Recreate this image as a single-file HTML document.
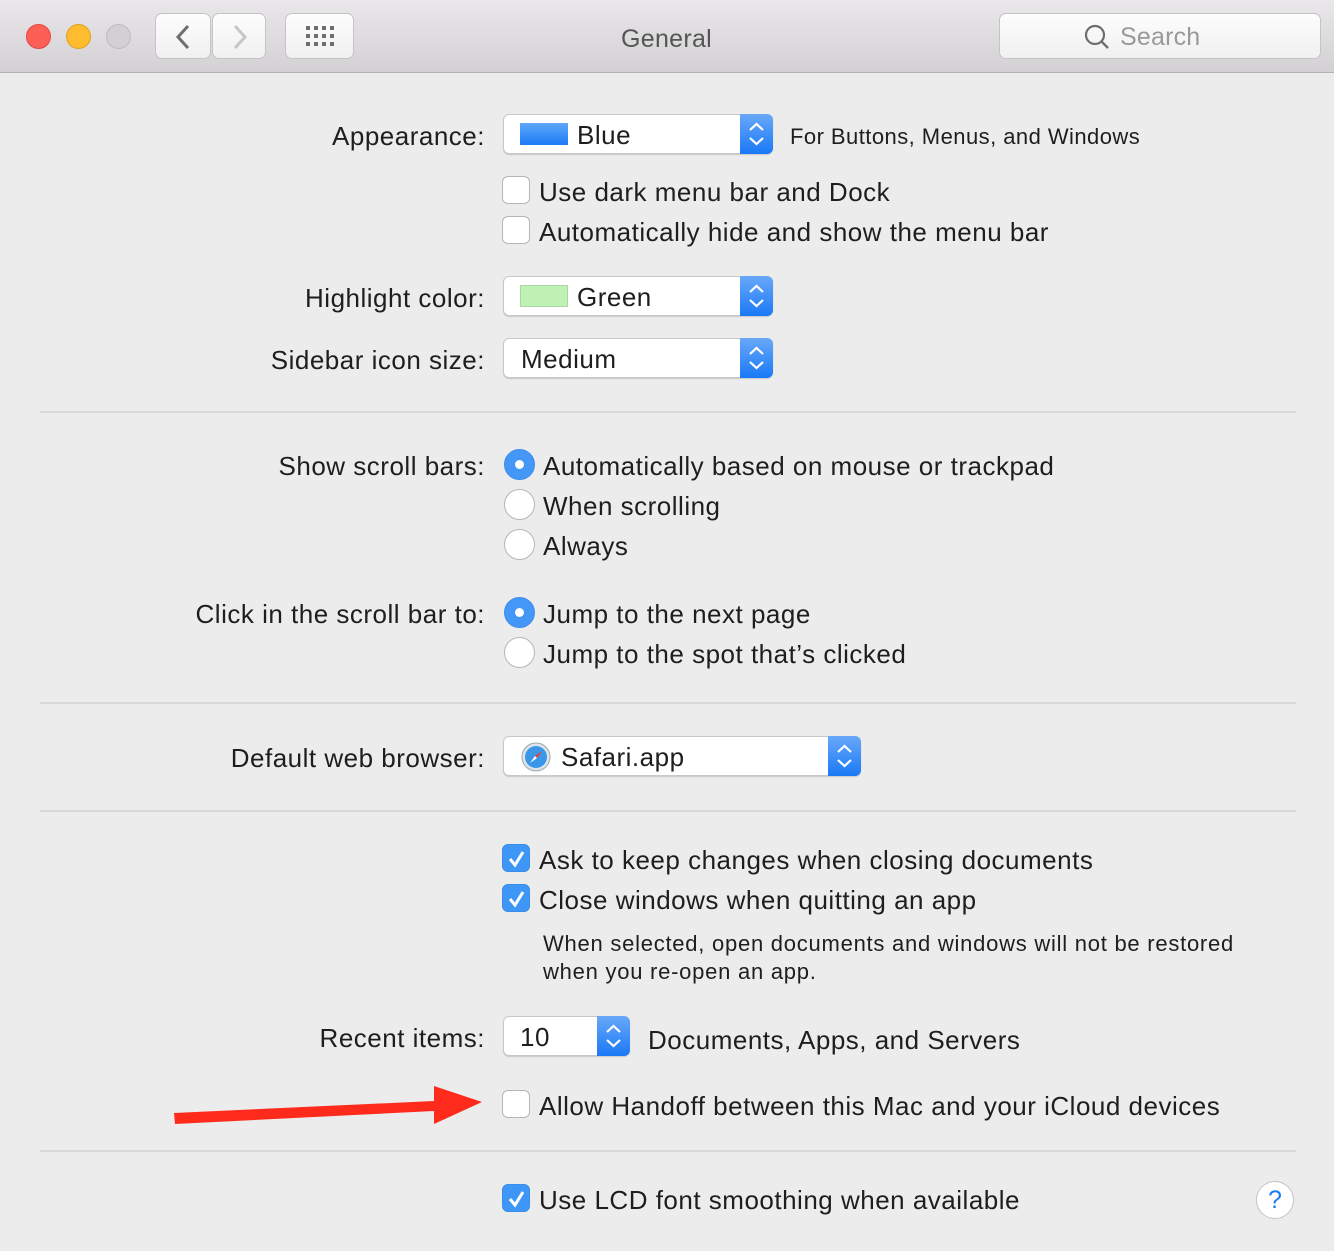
<!DOCTYPE html>
<html><head><meta charset="utf-8"><style>
*{box-sizing:border-box;margin:0;padding:0}
body{width:1334px;height:1251px;background:#ececec;font-family:"Liberation Sans",sans-serif;color:#1e1e1e;position:relative;overflow:hidden}
.tb{position:absolute;left:0;top:0;width:1334px;height:73px;background:linear-gradient(#e9e7e9,#d3d1d3);border-bottom:1px solid #b4b4b4}
.a{position:absolute;white-space:nowrap;line-height:30px;font-size:26px;letter-spacing:0.5px}
.lab{position:absolute;right:849px;white-space:nowrap;line-height:30px;font-size:26px;letter-spacing:0.5px;text-align:right}
.dot{position:absolute;width:25px;height:25px;border-radius:50%;top:24px}
.btn{position:absolute;top:13px;height:46px;background:linear-gradient(#fdfdfd,#f0f0f0);border:1px solid #c4c4c4;border-radius:7px}
.pop{position:absolute;height:40px;background:#fff;border:1px solid #c8c8c8;border-radius:6px;box-shadow:0 1px 1px rgba(0,0,0,.15)}
.pop .arr{position:absolute;right:-1px;top:-1px;width:33px;height:40px;background:linear-gradient(#69a8f8,#1a79f6);border-radius:0 6px 6px 0}
.pop .t{position:absolute;top:5px;line-height:30px;font-size:26px;letter-spacing:0.5px}
.cb{position:absolute;left:502px;width:28px;height:28px;border:1px solid #b6b6b6;border-radius:6px;background:#fff}
.cb.on{background:#3e97f6;border-color:#3a8ee8}
.rb{position:absolute;left:504px;width:31px;height:31px;border-radius:50%;border:1px solid #b6b6b6;background:#fff}
.rb.on{background:#4497f6;border-color:#3f8deb}
.rb.on::after{content:"";position:absolute;left:10px;top:10px;width:9px;height:9px;border-radius:50%;background:#fff}
.sep{position:absolute;left:40px;width:1256px;height:2px;background:#d8d8d8}
</style></head><body>
<div class="tb"></div>
<div class="dot" style="left:26px;background:#fd5f57;border:1px solid #e2463f"></div>
<div class="dot" style="left:66px;background:#febc2e;border:1px solid #dea123"></div>
<div class="dot" style="left:106px;background:#d2d0d2;border:1px solid #bdbbbd"></div>
<div class="btn" style="left:155px;width:56px"><svg width="56" height="46"><path d="M32 12 L22 23 L32 34" stroke="#6e6e6e" stroke-width="3" fill="none"/></svg></div>
<div class="btn" style="left:212px;width:54px"><svg width="54" height="46"><path d="M22 12 L32 23 L22 34" stroke="#c6c6c6" stroke-width="3" fill="none"/></svg></div>
<div class="btn" style="left:285px;width:69px"><svg width="69" height="46" fill="#6e6e6e"><rect x="20" y="12" width="4" height="4"/><rect x="28" y="12" width="4" height="4"/><rect x="36" y="12" width="4" height="4"/><rect x="44" y="12" width="4" height="4"/><rect x="20" y="20" width="4" height="4"/><rect x="28" y="20" width="4" height="4"/><rect x="36" y="20" width="4" height="4"/><rect x="44" y="20" width="4" height="4"/><rect x="20" y="28" width="4" height="4"/><rect x="28" y="28" width="4" height="4"/><rect x="36" y="28" width="4" height="4"/><rect x="44" y="28" width="4" height="4"/></svg></div>
<div class="a" style="left:621px;top:24px;color:#555;font-size:25px;letter-spacing:0.3px">General</div>
<div class="btn" style="left:999px;width:322px"><svg style="position:absolute;left:84px;top:10px" width="28" height="28"><circle cx="11" cy="11" r="9" stroke="#6e6e6e" stroke-width="2.2" fill="none"/><path d="M17.5 17.5 L24 24" stroke="#6e6e6e" stroke-width="2.4"/></svg><span class="a" style="left:120px;top:8px;color:#999;font-size:25px;letter-spacing:0.2px">Search</span></div>

<div class="lab" style="top:121px">Appearance:</div>
<div class="pop" style="left:503px;top:114px;width:270px"><div style="position:absolute;left:16px;top:8px;width:48px;height:22px;background:linear-gradient(#5ea7fb,#1b7af5)"></div><span class="t" style="left:73px">Blue</span><div class="arr"><svg width="33" height="40"><path d="M10 16 L16.5 10 L23 16 M10 24 L16.5 30 L23 24" stroke="#fff" stroke-width="2.2" fill="none"/></svg></div></div>
<div class="a" style="left:790px;top:122px;font-size:22px;letter-spacing:0.45px">For Buttons, Menus, and Windows</div>
<div class="cb" style="top:176px"></div><div class="a" style="left:539px;top:177px">Use dark menu bar and Dock</div>
<div class="cb" style="top:216px"></div><div class="a" style="left:539px;top:217px">Automatically hide and show the menu bar</div>

<div class="lab" style="top:283px">Highlight color:</div>
<div class="pop" style="left:503px;top:276px;width:270px"><div style="position:absolute;left:16px;top:8px;width:48px;height:22px;background:#bff0b4;border:1px solid #a8d89e"></div><span class="t" style="left:73px">Green</span><div class="arr"><svg width="33" height="40"><path d="M10 16 L16.5 10 L23 16 M10 24 L16.5 30 L23 24" stroke="#fff" stroke-width="2.2" fill="none"/></svg></div></div>
<div class="lab" style="top:345px">Sidebar icon size:</div>
<div class="pop" style="left:503px;top:338px;width:270px"><span class="t" style="left:17px">Medium</span><div class="arr"><svg width="33" height="40"><path d="M10 16 L16.5 10 L23 16 M10 24 L16.5 30 L23 24" stroke="#fff" stroke-width="2.2" fill="none"/></svg></div></div>
<div class="sep" style="top:411px"></div>

<div class="lab" style="top:451px">Show scroll bars:</div>
<div class="rb on" style="top:449px"></div><div class="a" style="left:543px;top:451px">Automatically based on mouse or trackpad</div>
<div class="rb" style="top:489px"></div><div class="a" style="left:543px;top:491px">When scrolling</div>
<div class="rb" style="top:529px"></div><div class="a" style="left:543px;top:531px">Always</div>
<div class="lab" style="top:599px">Click in the scroll bar to:</div>
<div class="rb on" style="top:597px"></div><div class="a" style="left:543px;top:599px">Jump to the next page</div>
<div class="rb" style="top:637px"></div><div class="a" style="left:543px;top:639px">Jump to the spot that’s clicked</div>
<div class="sep" style="top:702px"></div>

<div class="lab" style="top:743px">Default web browser:</div>
<div class="pop" style="left:503px;top:736px;width:358px"><svg style="position:absolute;left:17px;top:5px" width="30" height="30"><circle cx="15" cy="15" r="14" fill="#dfe4ea" stroke="#9aa" stroke-width="1"/><circle cx="15" cy="15" r="11" fill="#3a97e8"/><path d="M21 9 L16 16 L14 14 Z" fill="#f33"/><path d="M9 21 L14 14 L16 16 Z" fill="#fff"/></svg><span class="t" style="left:57px">Safari.app</span><div class="arr"><svg width="33" height="40"><path d="M10 16 L16.5 10 L23 16 M10 24 L16.5 30 L23 24" stroke="#fff" stroke-width="2.2" fill="none"/></svg></div></div>
<div class="sep" style="top:810px"></div>

<div class="cb on" style="top:844px"><svg width="28" height="28"><path d="M7 14 L12 20 L20 7" stroke="#fff" stroke-width="3" fill="none"/></svg></div><div class="a" style="left:539px;top:845px">Ask to keep changes when closing documents</div>
<div class="cb on" style="top:884px"><svg width="28" height="28"><path d="M7 14 L12 20 L20 7" stroke="#fff" stroke-width="3" fill="none"/></svg></div><div class="a" style="left:539px;top:885px">Close windows when quitting an app</div>
<div class="a" style="left:543px;top:929px;font-size:22px;letter-spacing:0.75px">When selected, open documents and windows will not be restored</div>
<div class="a" style="left:543px;top:957px;font-size:22px;letter-spacing:0.75px">when you re-open an app.</div>

<div class="lab" style="top:1023px">Recent items:</div>
<div class="pop" style="left:503px;top:1016px;width:127px"><span class="t" style="left:16px">10</span><div class="arr"><svg width="33" height="40"><path d="M10 16 L16.5 10 L23 16 M10 24 L16.5 30 L23 24" stroke="#fff" stroke-width="2.2" fill="none"/></svg></div></div>
<div class="a" style="left:648px;top:1025px">Documents, Apps, and Servers</div>
<div class="cb" style="top:1090px"></div><div class="a" style="left:539px;top:1091px">Allow Handoff between this Mac and your iCloud devices</div>
<svg style="position:absolute;left:0;top:1080px" width="500" height="60"><path d="M174 33 L434 21 L434 6 L482 22 L434 44 L434 31 L175 44 Z" fill="#fe2b1d"/></svg>
<div class="sep" style="top:1150px"></div>
<div class="cb on" style="top:1184px"><svg width="28" height="28"><path d="M7 14 L12 20 L20 7" stroke="#fff" stroke-width="3" fill="none"/></svg></div><div class="a" style="left:539px;top:1185px">Use LCD font smoothing when available</div>
<div style="position:absolute;left:1256px;top:1181px;width:38px;height:38px;border-radius:50%;background:#fff;border:1px solid #c4c4c4;color:#1a7cf5;font-size:25px;text-align:center;line-height:36px">?</div>
</body></html>
